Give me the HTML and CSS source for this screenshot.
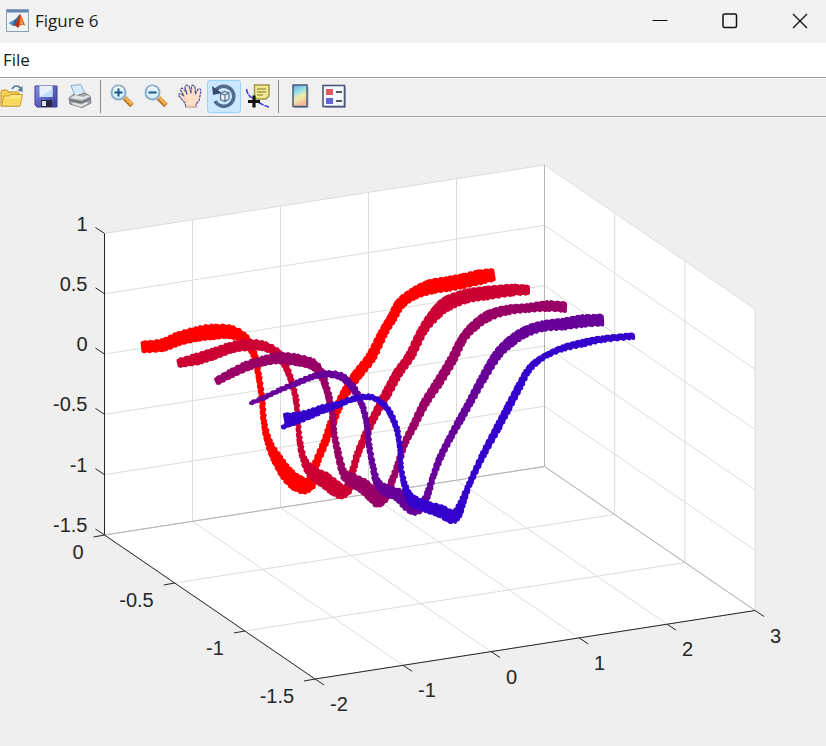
FILE: index.html
```
<!DOCTYPE html>
<html lang="en">
<head>
    <meta charset="UTF-8">
    <meta name="viewport" content="width=device-width, initial-scale=1.0">
    <title>Figure 6</title>
    <link rel="stylesheet" href="styles.css">
</head>
<body>
    <header class="title-bar">
        <svg class="app-icon" viewBox="0 0 23 23">
            <rect x="0.5" y="0.5" width="22" height="22" fill="#eef3f7" stroke="#8fa0b2"/>
            <rect x="1" y="1" width="21" height="2.5" fill="#5f87b2"/>
            <path d="M2.5 14 L8 11 L11 14 L7 17 Z" fill="#4a93c9"/>
            <path d="M8 11 C11 10 12 6 14 5 L11 14 L7 17 Z" fill="#2f6394"/>
            <path d="M14 5 C16 6 17 13 20 17 C17 15 15 15 12 19 C11 17 9 16 7 17 C11 15 12 8 14 5 Z" fill="#e0601f"/>
            <path d="M14 5 C14 10 13 15 12 19 C10 17 9 16 7 17 C11 15 12 9 14 5 Z" fill="#a8321c"/>
            <path d="M15 8 L17 15 L14 15 Z" fill="#f39b35"/>
        </svg>
        <h1 class="title">Figure 6</h1>
        <div class="window-buttons">
            <button class="window-btn" aria-label="Minimize">
                <svg viewBox="0 0 16 16"><path d="M0.5 7.5 H15.5"/></svg>
            </button>
            <button class="window-btn" aria-label="Maximize">
                <svg viewBox="0 0 16 16"><rect x="1" y="1" width="13.5" height="13.5" rx="1.5" stroke-width="1.5"/></svg>
            </button>
            <button class="window-btn" aria-label="Close">
                <svg viewBox="0 0 16 16"><path d="M1 1 L15 15 M15 1 L1 15" stroke-width="1.4"/></svg>
            </button>
        </div>
    </header>
    <nav class="menu-bar">
        <button class="menu-item">File</button>
    </nav>
    <div class="toolbar">
        <button class="tool-btn" aria-label="Open file">
            <svg viewBox="0 0 24 24">
                <path d="M12 5 C14 1 19 1 21 5" fill="none" stroke="#5d7896" stroke-width="1.6"/>
                <path d="M22.5 2 V8 L17.5 6.5 Z" fill="#5d7896"/>
                <path d="M1 22 V8 Q1 6 3 6 H7 L9 8 H17 Q19 8 19 10 V22 Z" fill="#f2cf55" stroke="#c59223"/>
                <path d="M1.5 22 L4 12 H9 L11 10.5 H22.5 L20 22 Z" fill="#fde885" stroke="#cc9a20"/>
                <path d="M3 20.5 L5 14.5 H20 L19 20.5 Z" fill="#f9d95c"/>
            </svg>
        </button>
        <button class="tool-btn" aria-label="Save figure">
            <svg viewBox="0 0 24 24">
                <defs>
                    <linearGradient id="disk" x1="0" y1="0" x2="1" y2="1">
                        <stop offset="0" stop-color="#8b90e6"/>
                        <stop offset="1" stop-color="#3438a2"/>
                    </linearGradient>
                </defs>
                <path d="M1 2 H23 V23 H3 L1 21 Z" fill="url(#disk)" stroke="#3a3e94"/>
                <rect x="5.5" y="2" width="13" height="11" fill="#e6f1fb"/>
                <path d="M5.5 13 L18.5 5 V13 Z" fill="#c2dcf4"/>
                <rect x="7" y="16" width="11" height="7" fill="#27283f"/>
                <rect x="8" y="17" width="4" height="5" fill="#dfe3ee"/>
            </svg>
        </button>
        <button class="tool-btn" aria-label="Print figure">
            <svg viewBox="0 0 24 24">
                <path d="M3 1.5 L13 0.5 L17 10 L7 12 Z" fill="#d5e9fa" stroke="#8faecb"/>
                <path d="M1 14 L6 10 L8 12 L17 9 L22 12 L23 19 L14 23.5 L2 20 Z" fill="#a3a6aa" stroke="#787b80"/>
                <path d="M2 14 L7 11 L15 13 L20 11 L22 12.5 L14 16 Z" fill="#e3e4e6"/>
                <path d="M2 15 L14 17.5 L22.5 13.5 V15.5 L14 19.5 L2 17 Z" fill="#707378"/>
                <path d="M5 18.5 L13 20.5 L19 18 L20 19.5 L13 23 L4 20 Z" fill="#e6e6e6"/>
            </svg>
        </button>
        <span class="separator"></span>
        <button class="tool-btn" aria-label="Zoom in">
            <svg viewBox="0 0 24 24">
                <path d="M14.5 14 L22 21.5" stroke="#b37622" stroke-width="5"/>
                <path d="M15 13.5 L22 20.5" stroke="#f0b04c" stroke-width="3"/>
                <circle cx="8.5" cy="8.5" r="7" fill="#d9f2fc" stroke="#8badcb" stroke-width="2"/>
                <path d="M4 5 Q8 1 13 5" fill="none" stroke="#fff" stroke-width="1.5"/>
                <path d="M4.5 8.5 H12.5 M8.5 4.5 V12.5" stroke="#1e5687" stroke-width="2"/>
            </svg>
        </button>
        <button class="tool-btn" aria-label="Zoom out">
            <svg viewBox="0 0 24 24">
                <path d="M14.5 14 L22 21.5" stroke="#b37622" stroke-width="5"/>
                <path d="M15 13.5 L22 20.5" stroke="#f0b04c" stroke-width="3"/>
                <circle cx="8.5" cy="8.5" r="7" fill="#d9f2fc" stroke="#8badcb" stroke-width="2"/>
                <path d="M4 5 Q8 1 13 5" fill="none" stroke="#fff" stroke-width="1.5"/>
                <path d="M4.5 8.5 H12.5" stroke="#1e5687" stroke-width="2"/>
            </svg>
        </button>
        <button class="tool-btn" aria-label="Pan">
            <svg viewBox="0 0 24 24">
                <path d="M8 23 L7 19 L1 12 Q0 9 3 10 L6 12 L2.5 6 Q3 3 6 5 L9 10 L7 3 Q8 0 11 2 L13 9 L13.5 2 Q15 0 17 3 L17.5 10 L20 5 Q23 4 23 7 L21 17 L18 20 V23 Z" fill="#fde0c6" stroke="#4a57a0" stroke-width="1.2" stroke-linejoin="round" stroke-dasharray="3 0.6"/>
                <path d="M8 22.5 H18" stroke="#edc39f" stroke-width="2"/>
                <path d="M6 14 L10 18" stroke="#edc39f" stroke-width="1"/>
            </svg>
        </button>
        <button class="tool-btn active" aria-label="Rotate 3D" aria-pressed="true">
            <svg viewBox="0 0 24 24">
                <path d="M4 6 A10 10 0 1 1 3 17" fill="none" stroke="#52698a" stroke-width="3.5"/>
                <path d="M0 2 L1 11 L10 9 Z" fill="#384d6c"/>
                <path d="M8.5 9.5 L12.5 7.5 L17 9 V15 L13 17.5 L8.5 15.5 Z M8.5 9.5 L13 11 L17 9 M13 11 V17.5" fill="#e6f0f8" stroke="#5b7190" stroke-width="1.2"/>
            </svg>
        </button>
        <button class="tool-btn" aria-label="Data cursor">
            <svg viewBox="0 0 24 24">
                <path d="M0.5 5 C1 9 3 12 6 14 M13 19 C16 20 19 22 23 23" fill="none" stroke="#2e2ef0" stroke-width="1.5" stroke-dasharray="5 1"/>
                <path d="M8.5 1 H23 V12 L20 15 H8.5 Z" fill="#f1e98f" stroke="#a09748" stroke-width="1.5"/>
                <path d="M11 5 H20 M11 8 H20 M11 11 H17" stroke="#a69d51" stroke-width="1.3"/>
                <path d="M2 17.5 H14 M8 11.5 V23.5" stroke="#151515" stroke-width="3.2"/>
            </svg>
        </button>
        <span class="separator"></span>
        <button class="tool-btn" aria-label="Insert colorbar">
            <svg viewBox="0 0 24 24">
                <defs>
                    <linearGradient id="rainbow" x1="0" y1="0" x2="0.3" y2="1">
                        <stop offset="0" stop-color="#7a9be0"/>
                        <stop offset="0.35" stop-color="#8fdceb"/>
                        <stop offset="0.65" stop-color="#f3edaa"/>
                        <stop offset="1" stop-color="#f5b89a"/>
                    </linearGradient>
                </defs>
                <path d="M20 3 V23.5 H6" fill="none" stroke="#a3a9b6"/>
                <rect x="5" y="1" width="14" height="21.5" fill="url(#rainbow)" stroke="#465b7e" stroke-width="1.5"/>
            </svg>
        </button>
        <button class="tool-btn" aria-label="Insert legend">
            <svg viewBox="0 0 24 24">
                <path d="M23.5 3 V23.5 H3" fill="none" stroke="#a3a9b6"/>
                <rect x="1" y="1.5" width="21.5" height="21" fill="#f7f8fd" stroke="#4c5779" stroke-width="1.6"/>
                <rect x="4" y="5" width="7" height="6" fill="#e05a60"/>
                <rect x="4" y="14" width="7" height="6" fill="#6265d8"/>
                <path d="M14 8 H20 M14 17 H20" stroke="#222" stroke-width="1.6"/>
            </svg>
        </button>
    </div>
    <main class="figure">
        <svg id="plot" class="plot" viewBox="0 0 826 629" role="img" aria-label="3-D scatter plot"></svg>
    </main>
    <script src="script.js"></script>
</body>
</html>
```
FILE: styles.css
```
* {
    box-sizing: border-box;
}
body {
    margin: 0;
    min-height: 100vh;
    display: flex;
    flex-direction: column;
    background-color: #efefef;
    color: #1a1a1a;
    font-family: "Open Sans", "Noto Sans", sans-serif;
    overflow: hidden;
}
button {
    margin: 0;
    padding: 0;
    border: 1px solid transparent;
    background: none;
    color: inherit;
    font: inherit;
}
.title-bar {
    display: flex;
    align-items: center;
    height: 43px;
    padding: 0 1px 2px 6px;
    background-color: #f2f2f2;
}
.app-icon {
    width: 23px;
    height: 23px;
}
.title {
    margin: 0 0 0 6px;
    font-size: 17px;
    font-weight: 400;
    line-height: 24px;
}
.window-buttons {
    display: flex;
    gap: 20px;
    margin-left: auto;
}
.window-btn {
    display: flex;
    justify-content: center;
    align-items: center;
    width: 50px;
    height: 40px;
}
.window-btn svg {
    width: 16px;
    height: 16px;
    fill: none;
    stroke: #111;
}
.menu-bar {
    display: flex;
    align-items: center;
    height: 34px;
    padding-left: 2px;
    background-color: #fff;
}
.menu-item {
    font-size: 17px;
    line-height: 24px;
}
.toolbar {
    display: flex;
    align-items: center;
    height: 40px;
    padding-bottom: 1px;
    background-color: #f0f0f0;
    border-top: 1px solid #a0a0a0;
    border-bottom: 1px solid #a0a0a0;
    box-shadow: inset 0 1px #fff, 0 1px #fafafa;
}
.tool-btn {
    display: flex;
    flex: none;
    justify-content: center;
    align-items: center;
    width: 34px;
    height: 33px;
    padding-bottom: 2px;
    border-radius: 3px;
}
.tool-btn:first-child {
    margin-left: -5px;
}
.tool-btn svg {
    width: 24px;
    height: 24px;
}
.tool-btn.active {
    background-color: #cce8ff;
    border-color: #99d1ff;
}
.separator {
    width: 1px;
    height: 33px;
    margin: 0 4px 0 3px;
    background-color: #8c8c8c;
}
.figure {
    flex: 1;
}
.plot {
    display: block;
    width: 100%;
    height: auto;
}
.wall {
    fill: #fff;
}
.grid {
    stroke: #dcdcdc;
}
.edge {
    stroke: #b4b4b4;
}
.axis {
    stroke: #262626;
}
.tick-label {
    fill: #262626;
    font-family: "Liberation Sans", Arial, sans-serif;
    font-size: 20px;
}
.series {
    fill: none;
    stroke-width: 4;
    stroke-linecap: round;
}
```
FILE: script.js
```
const plot = document.getElementById('plot');
const SVG_NS = 'http://www.w3.org/2000/svg';

// screen position of a data point: x -2..3, y 0..-1.5, z -1.5..1
function project(x, y, z) {
    return [
        104.5 + (x + 2) * 88 - y * 140.4,
        116.5 - (x + 2) * 13.7 - y * 96 + (1 - z) * 120.6
    ];
}

function add(tag, attrs, text) {
    const el = document.createElementNS(SVG_NS, tag);
    for (const key in attrs) {
        el.setAttribute(key, attrs[key]);
    }
    if (text !== undefined) {
        el.textContent = text;
    }
    plot.appendChild(el);
}

function line(a, b, cls) {
    add('line', {x1: a[0], y1: a[1], x2: b[0], y2: b[1], class: cls});
}

function drawAxes() {
    const outline = [
        project(-2, 0, 1), project(3, 0, 1), project(3, -1.5, 1),
        project(3, -1.5, -1.5), project(-2, -1.5, -1.5), project(-2, 0, -1.5)
    ];
    add('polygon', {points: outline.join(' '), class: 'wall'});

    for (let x = -2; x <= 3; x++) {
        line(project(x, 0, 1), project(x, 0, -1.5), 'grid');
        line(project(x, 0, -1.5), project(x, -1.5, -1.5), 'grid');
    }
    for (let y = 0; y >= -1.5; y -= 0.5) {
        line(project(-2, y, -1.5), project(3, y, -1.5), 'grid');
        line(project(3, y, -1.5), project(3, y, 1), 'grid');
    }
    for (let z = -1.5; z <= 1; z += 0.5) {
        line(project(-2, 0, z), project(3, 0, z), 'grid');
        line(project(3, 0, z), project(3, -1.5, z), 'grid');
    }
    line(project(-2, 0, -1.5), project(3, 0, -1.5), 'edge');
    line(project(3, 0, -1.5), project(3, 0, 1), 'edge');
    line(project(3, 0, -1.5), project(3, -1.5, -1.5), 'edge');

    line(project(-2, 0, 1), project(-2, 0, -1.5), 'axis');
    line(project(-2, 0, -1.5), project(-2, -1.5, -1.5), 'axis');
    line(project(-2, -1.5, -1.5), project(3, -1.5, -1.5), 'axis');
}

function drawTicks() {
    for (let z = -1.5; z <= 1; z += 0.5) {
        const [px, py] = project(-2, 0, z);
        line([px, py], [px - 9, py - 6], 'axis');
        add('text', {x: px - 17, y: py - 3, 'text-anchor': 'end', class: 'tick-label'}, z);
    }
    for (let y = 0; y >= -1.5; y -= 0.5) {
        const [px, py] = project(-2, y, -1.5);
        line([px, py], [px - 11, py + 2], 'axis');
        add('text', {x: px - 21, y: py + 24, 'text-anchor': 'end', class: 'tick-label'}, y);
    }
    for (let x = -2; x <= 3; x++) {
        const [px, py] = project(x, -1.5, -1.5);
        line([px, py], [px + 9, py + 6], 'axis');
        add('text', {x: px + 15, y: py + 32, class: 'tick-label'}, x);
    }
}

// each point: x, y, spread of the samples across the curve
const series = [
    {color: '#ff0000', points: [
        [143,230,12],[163,228,13],[178,222,14],[197,217,15],[212,215,16],[230,215,14],[245,222,10],[254,238,7],
        [259,261,6],[262,283,6],[264,306,6],[269,326,8],[277,342,12],[287,357,15],[297,366,17],[305,369,16],
        [311,365,12],[316,347,8],[325,325,8],[332,306,9],[338,290,9],[347,273,10],[357,258,11],[371,240,11],
        [383,216,10],[392,201,10],[400,187,11],[413,177,12],[430,170,15],[447,167,15],[463,164,15],[480,160,15],[493,158,13]
    ]},
    {color: '#cc0033', points: [
        [179,246,9],[197,242,12],[213,237,12],[230,231,11],[245,228,12],[263,229,10],[277,236,9],[285,248,7],
        [291,263,6],[296,283,6],[298,306,5],[300,326,6],[304,343,7],[312,355,13],[323,362,16],[335,371,16],
        [342,375,14],[348,371,10],[353,353,7],[358,336,7],[365,320,8],[373,302,8],[387,276,10],[398,256,10],
        [410,239,10],[423,213,10],[437,195,13],[448,186,15],[467,179,14],[487,176,14],[513,173,12],[528,173,10]
    ]},
    {color: '#990066', points: [
        [217,264,8],[230,257,9],[247,249,10],[263,244,10],[280,241,12],[297,243,12],[312,247,11],[320,255,9],
        [325,267,7],[329,281,7],[333,300,6],[334,316,6],[338,336,7],[343,355,8],[350,362,14],[363,369,15],
        [373,378,15],[378,384,13],[385,380,9],[392,364,7],[398,348,7],[404,328,7],[413,310,8],[425,286,9],
        [438,266,10],[452,243,10],[462,223,9],[473,210,10],[488,199,11],[507,193,10],[527,191,9],[547,189,11],[565,190,11]
    ]},
    {color: '#660099', points: [
        [251,286,4],[263,281,5],[280,273,5],[297,266,6],[312,260,6],[327,257,7],[342,260,8],[353,271,8],
        [362,288,6],[367,308,6],[369,328,6],[373,350,6],[377,365,8],[385,373,12],[398,378,13],[408,388,13],
        [415,393,11],[423,388,9],[428,376,7],[433,360,6],[440,341,7],[450,321,7],[460,303,8],[470,285,8],
        [483,261,9],[497,238,10],[510,225,11],[525,215,11],[543,209,11],[563,207,12],[583,204,13],[602,203,12]
    ]},
    {color: '#3300cc', points: [
        [286,303,15],[297,301,12],[310,297,10],[323,292,9],[337,288,7],[353,282,6],[370,280,6],[382,286,6],
        [390,296,6],[397,313,6],[400,333,5],[401,350,5],[404,366,6],[408,377,8],[413,384,12],[427,390,12],
        [440,394,13],[452,400,14],[457,397,11],[462,386,8],[469,368,6],[483,338,7],[498,310,8],[508,291,8],
        [519,270,8],[527,255,7],[535,246,7],[547,238,6],[563,231,7],[583,226,8],[603,222,7],[633,219,7]
    ]},
    // loose samples under the start of the last curve
    {color: '#3300cc', points: [[283,310,5],[290,307,5],[297,305,5]]}
];

// Catmull-Rom interpolation of one coordinate
function smooth(a, b, c, d, t) {
    return 0.5 * (2 * b + (c - a) * t + (2 * a - 5 * b + 4 * c - d) * t * t + (3 * b - a - 3 * c + d) * t * t * t);
}

// rows of round markers laid across the curve, each row slightly shifted
function drawSeries({color, points}) {
    let d = '';
    let n = 0;
    for (let i = 0; i < points.length - 1; i++) {
        const p0 = points[Math.max(0, i - 1)];
        const p1 = points[i];
        const p2 = points[i + 1];
        const p3 = points[Math.min(points.length - 1, i + 2)];
        const steps = Math.ceil(Math.hypot(p2[0] - p1[0], p2[1] - p1[1]) / 2);
        for (let s = 0; s <= steps; s++) {
            const t = s / steps;
            // direction blends between the tangents at both ends
            const dx = (p2[0] - p0[0]) * (1 - t) + (p3[0] - p1[0]) * t;
            const dy = (p2[1] - p0[1]) * (1 - t) + (p3[1] - p1[1]) * t;
            const length = Math.hypot(dx, dy);
            const nx = -dy / length;
            const ny = dx / length;
            const half = Math.max(0, (p1[2] + (p2[2] - p1[2]) * t) / 2 - 2);
            const shift = Math.sin(n++ * 2.1) * 0.6;
            const cx = smooth(p0[0], p1[0], p2[0], p3[0], t) + nx * shift;
            const cy = smooth(p0[1], p1[1], p2[1], p3[1], t) + ny * shift;
            d += `M${(cx - nx * half).toFixed(1)} ${(cy - ny * half).toFixed(1)}`;
            d += `L${(cx + nx * half).toFixed(1)} ${(cy + ny * half).toFixed(1)}`;
        }
    }
    add('path', {d: d, stroke: color, class: 'series'});
}

drawAxes();
drawTicks();
series.forEach(drawSeries);
```
